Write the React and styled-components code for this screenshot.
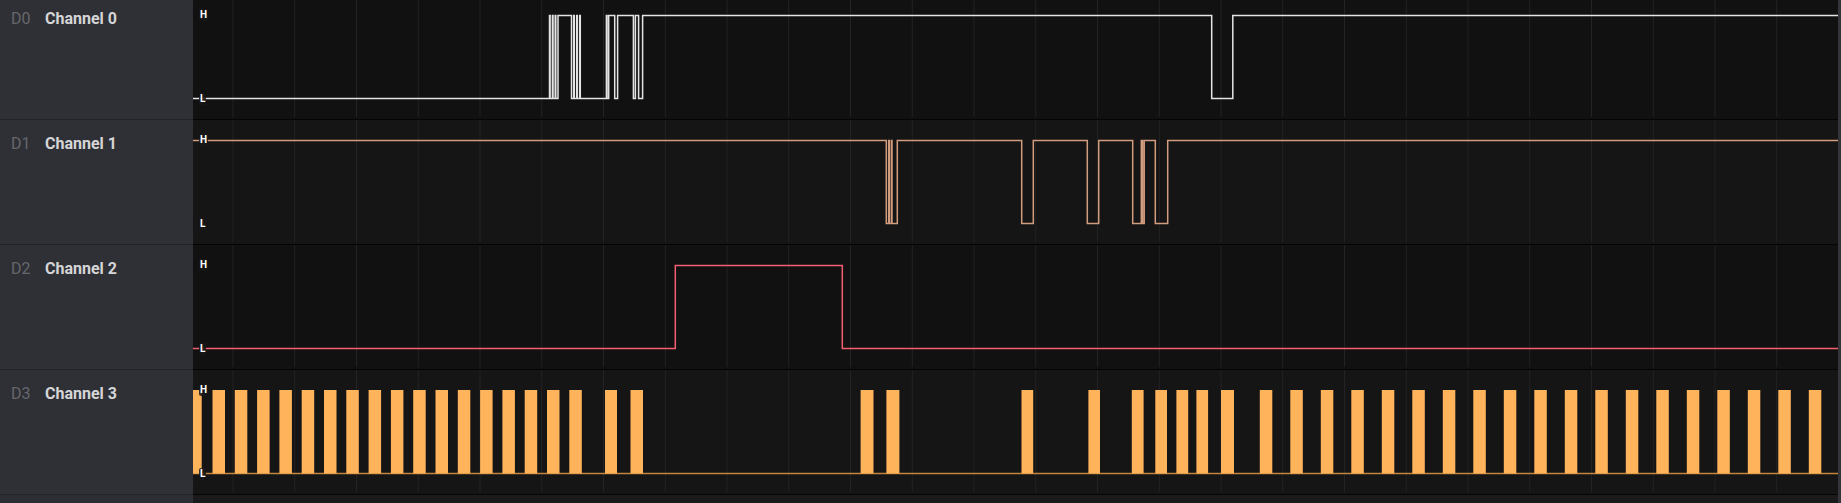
import React from 'react';
import styled, { createGlobalStyle } from 'styled-components';

const GlobalStyle = createGlobalStyle`
  html, body {
    margin: 0;
    padding: 0;
    background: #1b1b1b;
  }
  body {
    font-family: Roboto, "Liberation Sans", sans-serif;
  }
`;

const PLOT_X0 = 193;
const PLOT_X1 = 1838;
const HI = 20.5;
const LO = 103.5;

const Page = styled.div`
  display: flex;
  width: 1841px;
  height: 503px;
  overflow: hidden;
  background: #1b1b1b;
`;

const Tracks = styled.div`
  flex: 1;
  display: flex;
  flex-direction: column;
  margin-top: -5px;
`;

const Row = styled.div`
  display: grid;
  grid-template-columns: 193px 1fr;
  height: 125px;
  flex: none;
`;

const Filler = styled.div`
  display: grid;
  grid-template-columns: 193px 1fr;
  flex: 1;
`;

const LabelCell = styled.div`
  display: flex;
  align-items: baseline;
  padding: 14px 0 0 11px;
  background: #2f3035;
  border-bottom: 1px solid #232428;
  line-height: 19px;
  font-size: 16px;
`;

const FillerLabel = styled.div`
  background: #2d2e33;
`;

const FillerPlot = styled.div`
  background: #1a1a1a;
`;

const ChannelId = styled.span`
  width: 34px;
  color: #66676c;
  font-weight: 400;
`;

const ChannelName = styled.span`
  color: #d5d5d7;
  font-weight: 700;
`;

const PlotCell = styled.div`
  position: relative;
  background: ${(p) => p.$bg};
  border-bottom: 1px solid #050505;
  overflow: hidden;
`;

const Wave = styled.svg`
  display: block;
  width: 100%;
  height: 124px;
`;

const Level = styled.span`
  position: absolute;
  left: 6px;
  top: ${(p) => p.$top}px;
  padding: 0 1px;
  font-size: 10px;
  line-height: 12px;
  font-weight: 700;
  color: #ffffff;
  background: rgba(24, 24, 24, 0.85);
  border-radius: 2px;
`;

const Scrollbar = styled.div`
  width: 3px;
  flex: none;
  background: #34353a;
`;

const gridXs = [];
for (let x = 233; x < PLOT_X1; x += 61.75) gridXs.push(x);

const stepPath = (startHigh, toggles) => {
  let high = startHigh;
  let d = `M${PLOT_X0 - 2},${high ? HI : LO}`;
  toggles.forEach((t) => {
    d += ` H${t}`;
    high = !high;
    d += ` V${high ? HI : LO}`;
  });
  d += ` H${PLOT_X1 + 2}`;
  return d;
};

// narrow spike helper: rise and fall almost on the same x
const spike = (x) => [x - 0.3, x + 0.3];

const ch0 = [
  ...spike(549.8),
  ...spike(552.7),
  ...spike(555.5),
  558, 571.5,
  ...spike(574),
  ...spike(577),
  ...spike(580),
  ...spike(606.7),
  608.7, 614.7,
  617.6, 633.4,
  635.4, 638.6,
  642.6,
  1211.7, 1232.8,
];

const ch1 = [
  886.3,
  ...spike(889),
  ...spike(891.7),
  897.3,
  1021.7, 1033.3,
  1087.3, 1098.7,
  1132.7, 1141.3, 1142.6, 1144.2,
  1155.3, 1167.7,
];

const ch2 = [675.3, 842.3];

const ch3Pulses = [[188, 201.7]];
for (let k = 0; k <= 16; k++) ch3Pulses.push([212.5 + 22.3 * k, 225 + 22.3 * k]);
ch3Pulses.push(
  [605, 617],
  [630.5, 643],
  [860.6, 873.5],
  [886.4, 899.4],
  [1021.5, 1033.2],
  [1088.4, 1100],
  [1131.8, 1143.6],
  [1155.3, 1167],
  [1176.4, 1188.2],
  [1196.4, 1208.1],
  [1221, 1234]
);
for (let k = 0; k <= 18; k++) ch3Pulses.push([1259.8 + 30.5 * k, 1272.3 + 30.5 * k]);

const channels = [
  { id: 'D0', name: 'Channel 0', bg: '#111111', color: '#e4e4e4', kind: 'line', startHigh: false, toggles: ch0 },
  { id: 'D1', name: 'Channel 1', bg: '#151515', color: '#d29c7e', kind: 'line', startHigh: true, toggles: ch1 },
  { id: 'D2', name: 'Channel 2', bg: '#111111', color: '#f25f70', kind: 'line', startHigh: false, toggles: ch2 },
  { id: 'D3', name: 'Channel 3', bg: '#151515', color: '#ffb45c', kind: 'pulses', pulses: ch3Pulses },
];

const Grid = () => (
  <g>
    {gridXs.map((x) => (
      <line key={x} x1={x} x2={x} y1={0} y2={122} stroke="#232323" strokeWidth={1} />
    ))}
  </g>
);

const Signal = ({ ch }) => {
  if (ch.kind === 'pulses') {
    return (
      <g>
        <line x1={PLOT_X0} x2={PLOT_X1} y1={LO} y2={LO} stroke="#c4853e" strokeWidth={1.5} />
        {ch.pulses.map(([a, b], i) => (
          <rect key={i} x={a} y={HI - 0.5} width={b - a} height={LO - HI + 0.5} fill={ch.color} />
        ))}
      </g>
    );
  }
  return (
    <path
      d={stepPath(ch.startHigh, ch.toggles)}
      fill="none"
      stroke={ch.color}
      strokeWidth={1.5}
      strokeLinejoin="miter"
    />
  );
};

const Track = ({ ch }) => (
  <Row>
    <LabelCell>
      <ChannelId>{ch.id}</ChannelId>
      <ChannelName>{ch.name}</ChannelName>
    </LabelCell>
    <PlotCell $bg={ch.bg}>
      <Wave viewBox={`${PLOT_X0} 0 ${PLOT_X1 - PLOT_X0} 124`} preserveAspectRatio="none">
        <Grid />
        <Signal ch={ch} />
      </Wave>
      <Level $top={14}>H</Level>
      <Level $top={98}>L</Level>
    </PlotCell>
  </Row>
);

const App = () => (
  <>
    <GlobalStyle />
    <Page>
      <Tracks>
        {channels.map((ch) => (
          <Track key={ch.id} ch={ch} />
        ))}
        <Filler>
          <FillerLabel />
          <FillerPlot />
        </Filler>
      </Tracks>
      <Scrollbar />
    </Page>
  </>
);

export default App;
